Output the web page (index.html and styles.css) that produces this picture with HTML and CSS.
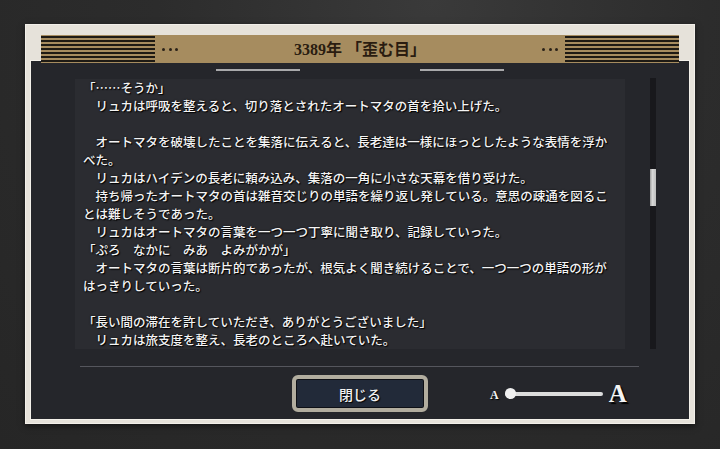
FILE: index.html
```html
<!DOCTYPE html>
<html lang="ja">
<head>
<meta charset="utf-8">
<title>3389年 「歪む目」</title>
<link rel="stylesheet" href="styles.css">
</head>
<body>
<div class="frame">
  <div class="header">
    <div class="stripes"></div>
    <div class="dots"><span></span><span></span><span></span></div>
    <div class="title">3389年 「歪む目」</div>
    <div class="dots"><span></span><span></span><span></span></div>
    <div class="stripes"></div>
  </div>
  <div class="panel">
    <div class="tabs"><span class="tab"></span><span class="tab"></span></div>
    <div class="body">
      <div class="text">
        <p>「……そうか」</p>
        <p>　リュカは呼吸を整えると、切り落とされたオートマタの首を拾い上げた。</p>
        <p class="blank"></p>
        <p>　オートマタを破壊したことを集落に伝えると、長老達は一様にほっとしたような表情を浮かべた。</p>
        <p>　リュカはハイデンの長老に頼み込み、集落の一角に小さな天幕を借り受けた。</p>
        <p>　持ち帰ったオートマタの首は雑音交じりの単語を繰り返し発している。意思の疎通を図ることは難しそうであった。</p>
        <p>　リュカはオートマタの言葉を一つ一つ丁寧に聞き取り、記録していった。</p>
        <p>「ぷろ　なかに　みあ　よみがかが」</p>
        <p>　オートマタの言葉は断片的であったが、根気よく聞き続けることで、一つ一つの単語の形がはっきりしていった。</p>
        <p class="blank"></p>
        <p>「長い間の滞在を許していただき、ありがとうございました」</p>
        <p>　リュカは旅支度を整え、長老のところへ赴いていた。</p>
      </div>
      <div class="scroll"><div class="thumb" style="margin-top:91px"></div></div>
    </div>
    <div class="sep"></div>
    <div class="controls">
      <button class="close">閉じる</button>
      <div class="size">
        <span class="a-small">A</span>
        <div class="track"></div>
        <span class="a-big">A</span>
      </div>
    </div>
  </div>
</div>
</body>
</html>
```
FILE: styles.css
```css
* { box-sizing: border-box; }
html, body { margin: 0; padding: 0; }
body {
  width: 720px;
  height: 449px;
  overflow: hidden;
  background: radial-gradient(ellipse at 60% 0%, #3a3a3a 0%, #2c2c2c 45%, #262626 100%);
  font-family: "Noto Sans CJK JP", sans-serif;
}
.frame {
  margin: 24px 0 0 25px;
  width: 670px;
  height: 400px;
  padding: 11px 5px 4px;
  background: #e6e2da;
  box-shadow: 0 0 0 1px #f2efe9 inset, 0 2px 6px rgba(0,0,0,0.5);
}
.header {
  position: relative;
  z-index: 1;
  margin: 0 11px -3px;
  height: 28px;
  background: #a68c5f;
  display: flex;
  align-items: center;
}
.stripes {
  width: 114px;
  height: 28px;
  background: repeating-linear-gradient(to bottom, #a68c5f 0, #a68c5f 1.5px, #1e1a14 1.5px, #1e1a14 3.5px, #a68c5f 3.5px, #a68c5f 4px);
}
.dots {
  display: flex;
  gap: 3.5px;
  margin: 0 7px;
}
.dots span {
  width: 3px;
  height: 3px;
  border-radius: 50%;
  background: #2a2118;
}
.title {
  flex: 1;
  text-align: center;
  font-family: "Liberation Serif", "Noto Sans CJK JP", serif;
  font-weight: bold;
  font-size: 16px;
  color: #2a1c10;
  line-height: 28px;
  padding-top: 1px;
}
.panel {
  height: 360px;
  background: #25262b;
  border: 1px solid #f3f0ea;
  display: flex;
  flex-direction: column;
}
.tabs {
  margin-top: 8px;
  display: flex;
  justify-content: center;
  gap: 120px;
}
.tab {
  width: 84px;
  height: 2px;
  background: #a9a9ab;
}
.body {
  margin-top: 8px;
  padding-left: 44px;
  display: flex;
  gap: 25px;
  height: 270px;
}
.text {
  width: 550px;
  height: 270px;
  overflow: hidden;
  background: #2b2c31;
  padding: 0 0 0 8px;
  font-size: 12.5px;
  line-height: 18px;
  color: #f4f4f4;
  font-weight: 500;
  text-shadow: 1px 1px 1px #000, 0 0 2px rgba(0,0,0,0.8);
  text-spacing-trim: space-all;
}
.text p {
  margin: 0;
  width: calc(42em + 1px);
}
.text p.blank { height: 18px; }
.scroll {
  width: 6px;
  height: 271px;
  margin-top: -1px;
  background: #18181c;
}
.thumb {
  height: 37px;
  background: linear-gradient(to right, #9a9a9a, #d8d8d8 40%, #bdbdbd);
}
.sep {
  margin-top: 17px;
  margin-left: 49px;
  width: 559px;
  height: 1px;
  background: #55565d;
}
.controls {
  margin-top: 8px;
  padding-left: 261px;
  display: flex;
  align-items: center;
}
.close {
  width: 136px;
  height: 37px;
  border: 4px solid #b2ad9f;
  border-radius: 6px;
  background: #222a39;
  box-shadow: inset 0 0 0 1px #0e1016;
  color: #f2f2f2;
  font-family: "Noto Sans CJK JP", sans-serif;
  font-size: 14px;
  font-weight: 500;
  text-shadow: 1px 1px 1px #000;
  padding: 0;
  cursor: pointer;
}
.size {
  margin-left: 62px;
  display: flex;
  align-items: center;
  font-family: "Liberation Serif", serif;
  font-weight: bold;
  color: #f4f4f4;
  text-shadow: 1px 1px 1px #000;
}
.a-small {
  font-size: 12px;
  line-height: 12px;
  margin-top: 2px;
}
.track {
  position: relative;
  margin-left: 6px;
  width: 98px;
  height: 4px;
  border-radius: 2px;
  background: #dcdcdc;
}
.track::before {
  content: "";
  position: absolute;
  left: 0;
  top: -3.5px;
  width: 11px;
  height: 11px;
  border-radius: 50%;
  background: #f0f0f0;
}
.a-big {
  margin-left: 6px;
  font-size: 25px;
  line-height: 25px;
  text-shadow: 2px 2px 1px #000;
}
```
